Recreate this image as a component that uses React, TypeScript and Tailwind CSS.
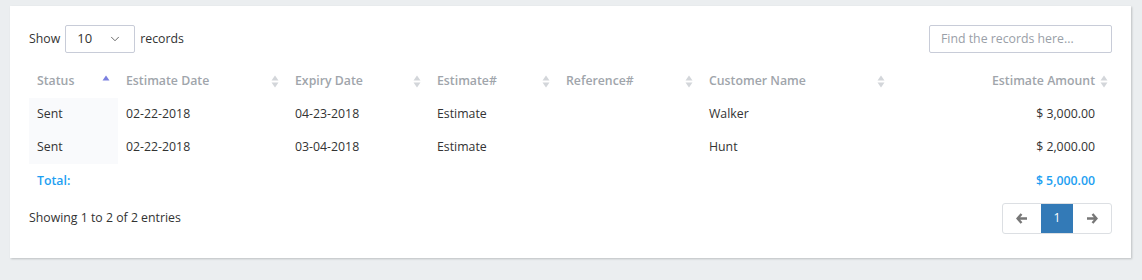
import { ChevronDown } from 'lucide-react';

const cols = [
  { label: 'Status', w: 'w-[89px]', active: true },
  { label: 'Estimate Date', w: 'w-[169px]' },
  { label: 'Expiry Date', w: 'w-[142px]' },
  { label: 'Estimate#', w: 'w-[129px]' },
  { label: 'Reference#', w: 'w-[143px]' },
  { label: 'Customer Name', w: 'w-[192px]' },
];

const rows = [
  { status: 'Sent', date: '02-22-2018', expiry: '04-23-2018', est: 'Estimate', ref: '', customer: 'Walker', amount: '$ 3,000.00' },
  { status: 'Sent', date: '02-22-2018', expiry: '03-04-2018', est: 'Estimate', ref: '', customer: 'Hunt', amount: '$ 2,000.00' },
];

function SortIcon({ active }: { active?: boolean }) {
  return (
    <svg width="8" height="13" viewBox="0 0 8 13" className="shrink-0">
      <path d="M4 0.5 L7.5 5.5 L0.5 5.5 Z" fill={active ? '#7b80e0' : '#d3d6da'} />
      {!active && <path d="M4 12.5 L7.5 7.5 L0.5 7.5 Z" fill="#d3d6da" />}
    </svg>
  );
}

export default function App() {
  return (
    <div className="bg-[#ebeef0] w-[1142px] h-[280px] pt-[6px] pl-[10px] font-['Open_Sans',sans-serif] text-[12.3px] text-[#333]">
      <div className="w-[1121px] h-[252px] bg-white shadow-[1px_1px_2px_rgba(0,0,0,0.2)] px-[19px] pt-[19px]">
        {/* top controls */}
        <div className="flex items-center justify-between h-[28px]">
          <div className="flex items-center gap-[5px]">
            <span>Show</span>
            <div className="w-[70px] h-[28px] border border-[#c8ccd8] rounded-[2px] flex items-center justify-between pl-[11px] pr-[12px]">
              <span className="text-[13px]">10</span>
              <ChevronDown size={14} strokeWidth={1.5} className="text-[#555]" />
            </div>
            <span>records</span>
          </div>
          <div className="w-[183px] h-[28px] border border-[#c8ccd8] rounded-[2px] flex items-center pl-[11px] text-[#9aa0a8]">
            Find the records here...
          </div>
        </div>

        {/* table */}
        <div className="mt-[12px]">
          <div className="flex h-[33px] items-center font-semibold text-[#a0a5ab]">
            {cols.map((c) => (
              <div key={c.label} className={`${c.w} flex items-center justify-between px-[8px]`}>
                <span>{c.label}</span>
                <SortIcon active={c.active} />
              </div>
            ))}
            <div className="flex-1 flex items-center justify-end gap-[5px] pr-[4px]">
              <span>Estimate Amount</span>
              <SortIcon />
            </div>
          </div>
          {rows.map((r, i) => (
            <div key={i} className="flex h-[33px] items-center">
              <div className="w-[89px] h-full bg-[#f9fafc] flex items-center px-[8px]">{r.status}</div>
              <div className="w-[169px] px-[8px]">{r.date}</div>
              <div className="w-[142px] px-[8px]">{r.expiry}</div>
              <div className="w-[129px] px-[8px]">{r.est}</div>
              <div className="w-[143px] px-[8px]">{r.ref}</div>
              <div className="w-[192px] px-[8px]">{r.customer}</div>
              <div className="flex-1 text-right pr-[17px]">{r.amount}</div>
            </div>
          ))}
          <div className="flex h-[34px] items-center font-semibold text-[#1e9ff2]">
            <div className="w-[89px] px-[8px]">Total:</div>
            <div className="flex-1 text-right pr-[17px]">$ 5,000.00</div>
          </div>
        </div>

        {/* footer */}
        <div className="flex items-center justify-between mt-[5px]">
          <span>Showing 1 to 2 of 2 entries</span>
          <div className="flex h-[31px] border border-[#dcdfe3] rounded-[3px] overflow-hidden">
            <div className="w-[38px] flex items-center justify-center text-[#777]">
              <svg width="12" height="11" viewBox="0 0 12 11">
                <path d="M5.5 1 L1.5 5.5 L5.5 10 M1.5 5.5 H11" stroke="currentColor" strokeWidth="2.4" fill="none" />
              </svg>
            </div>
            <div className="w-[32px] bg-[#337ab7] text-white flex items-center justify-center">1</div>
            <div className="w-[38px] flex items-center justify-center text-[#777]">
              <svg width="12" height="11" viewBox="0 0 12 11">
                <path d="M6.5 1 L10.5 5.5 L6.5 10 M10.5 5.5 H1" stroke="currentColor" strokeWidth="2.4" fill="none" />
              </svg>
            </div>
          </div>
        </div>
      </div>
    </div>
  );
}
